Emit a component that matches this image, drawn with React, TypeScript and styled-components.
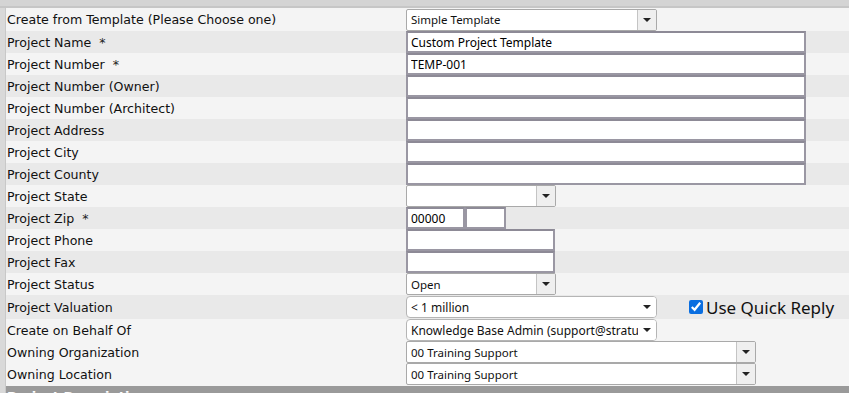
import React from 'react';
import styled, { createGlobalStyle } from 'styled-components';

const GlobalStyle = createGlobalStyle`
  body {
    margin: 0;
    background: #f4f4f4;
    font-family: "DejaVu Sans", Verdana, sans-serif;
    overflow: hidden;
  }
`;

const TopBar = styled.div`
  height: 6px;
  background: #d4d4d4;
  border-bottom: 2px solid #c6c6c6;
`;

const Frame = styled.div`
  display: flex;
`;

const SideStrip = styled.div`
  width: 5px;
  background: #d9d9d9;
  border-right: 1px solid #c8c8c8;
`;

const Form = styled.div`
  flex: 1;
  display: flex;
  flex-direction: column;
`;

const Row = styled.div<{ $alt?: boolean; $h?: number }>`
  display: grid;
  grid-template-columns: 400px 1fr;
  align-items: center;
  height: ${p => p.$h || 22}px;
  background: ${p => (p.$alt ? '#e9e9e9' : '#f4f4f4')};
`;

const Label = styled.div`
  font-family: "DejaVu Sans", Verdana, sans-serif;
  font-size: 12.6px;
  color: #111;
  padding-left: 1px;
  white-space: nowrap;
`;

const Req = styled.span`
  margin-left: 8px;
  color: #222;
`;

const Field = styled.div`
  display: flex;
  align-items: center;
  height: 100%;
`;

const TextInput = styled.input<{ $w: number }>`
  box-sizing: border-box;
  width: ${p => p.$w}px;
  height: 22px;
  border: 2px solid #9a97a3;
  border-top-color: #8d8a96;
  background: #fff;
  padding: 0 3px;
  margin: 0;
  font-family: "Noto Sans", "Open Sans", sans-serif;
  font-size: 12px;
  color: #000;
  outline: none;
`;

const SelectBox = styled.div<{ $w: number; $round?: boolean }>`
  box-sizing: border-box;
  width: ${p => p.$w}px;
  height: 22px;
  display: flex;
  align-items: center;
  background: #fff;
  border: 1px solid ${p => (p.$round ? '#b5b5b5' : '#a9a9a9')};
  border-radius: ${p => (p.$round ? '4px' : '2px')};
  font-family: "Noto Sans", "Open Sans", sans-serif;
  font-size: ${p => (p.$round ? '12px' : '11.5px')};
  color: #111;
  overflow: hidden;
`;

const SelectText = styled.span`
  flex: 1;
  padding-left: 4px;
  white-space: nowrap;
  overflow: hidden;
`;

const ArrowBox = styled.span<{ $plain?: boolean }>`
  width: 18px;
  height: 100%;
  display: flex;
  align-items: center;
  justify-content: center;
  background: ${p => (p.$plain ? '#fff' : '#efefef')};
  border-left: ${p => (p.$plain ? 'none' : '1px solid #c4c4c4')};
  &::after {
    content: '';
    border-left: 4px solid transparent;
    border-right: 4px solid transparent;
    border-top: 4px solid #222;
  }
`;

const Spread = styled.div`
  display: flex;
  align-items: center;
  height: 100%;
`;

const QuickReply = styled.label`
  display: flex;
  align-items: center;
  gap: 3px;
  margin-left: 32px;
  font-family: "Noto Sans", "Open Sans", sans-serif;
  font-size: 17px;
  color: #111;
`;

const Check = styled.input`
  width: 14px;
  height: 14px;
  margin: 0;
  accent-color: #0a6ee0;
`;

const SectionHeader = styled.div`
  height: 22px;
  background: #9a9a9a;
  color: #fff;
  font-weight: bold;
  font-size: 13px;
  padding-left: 1px;
  line-height: 22px;
  margin-top: 1px;
`;

const Select: React.FC<{ w: number; value?: string; round?: boolean }> = ({ w, value, round }) => (
  <SelectBox $w={w} $round={round}>
    <SelectText>{value}</SelectText>
    <ArrowBox $plain={round} />
  </SelectBox>
);

const textRows: { label: string; req?: boolean; value?: string; alt: boolean }[] = [
  { label: 'Project Name', req: true, value: 'Custom Project Template', alt: true },
  { label: 'Project Number', req: true, value: 'TEMP-001', alt: false },
  { label: 'Project Number (Owner)', alt: true },
  { label: 'Project Number (Architect)', alt: false },
  { label: 'Project Address', alt: true },
  { label: 'Project City', alt: false },
  { label: 'Project County', alt: true },
];

export default function App() {
  return (
    <>
      <GlobalStyle />
      <TopBar />
      <Frame>
        <SideStrip />
        <Form>
          <Row $h={23}>
            <Label>Create from Template (Please Choose one)</Label>
            <Field>
              <Select w={251} value="Simple Template" />
            </Field>
          </Row>
          {textRows.map(r => (
            <Row key={r.label} $alt={r.alt}>
              <Label>
                {r.label}
                {r.req && <Req>*</Req>}
              </Label>
              <Field>
                <TextInput $w={400} defaultValue={r.value || ''} />
              </Field>
            </Row>
          ))}
          <Row>
            <Label>Project State</Label>
            <Field>
              <Select w={150} />
            </Field>
          </Row>
          <Row $alt>
            <Label>
              Project Zip<Req>*</Req>
            </Label>
            <Field>
              <TextInput $w={59} defaultValue="00000" />
              <TextInput $w={41} />
            </Field>
          </Row>
          <Row>
            <Label>Project Phone</Label>
            <Field>
              <TextInput $w={149} />
            </Field>
          </Row>
          <Row $alt>
            <Label>Project Fax</Label>
            <Field>
              <TextInput $w={149} />
            </Field>
          </Row>
          <Row>
            <Label>Project Status</Label>
            <Field>
              <Select w={150} value="Open" />
            </Field>
          </Row>
          <Row $alt $h={24}>
            <Label>Project Valuation</Label>
            <Spread>
              <Select w={251} value="< 1 million" round />
              <QuickReply>
                <Check type="checkbox" defaultChecked />
                Use Quick Reply
              </QuickReply>
            </Spread>
          </Row>
          <Row>
            <Label>Create on Behalf Of</Label>
            <Field>
              <Select w={251} value="Knowledge Base Admin (support@stratusweb.com)" round />
            </Field>
          </Row>
          <Row>
            <Label>Owning Organization</Label>
            <Field>
              <Select w={350} value="00 Training Support" />
            </Field>
          </Row>
          <Row>
            <Label>Owning Location</Label>
            <Field>
              <Select w={350} value="00 Training Support" />
            </Field>
          </Row>
          <SectionHeader>Project Description</SectionHeader>
        </Form>
      </Frame>
    </>
  );
}
